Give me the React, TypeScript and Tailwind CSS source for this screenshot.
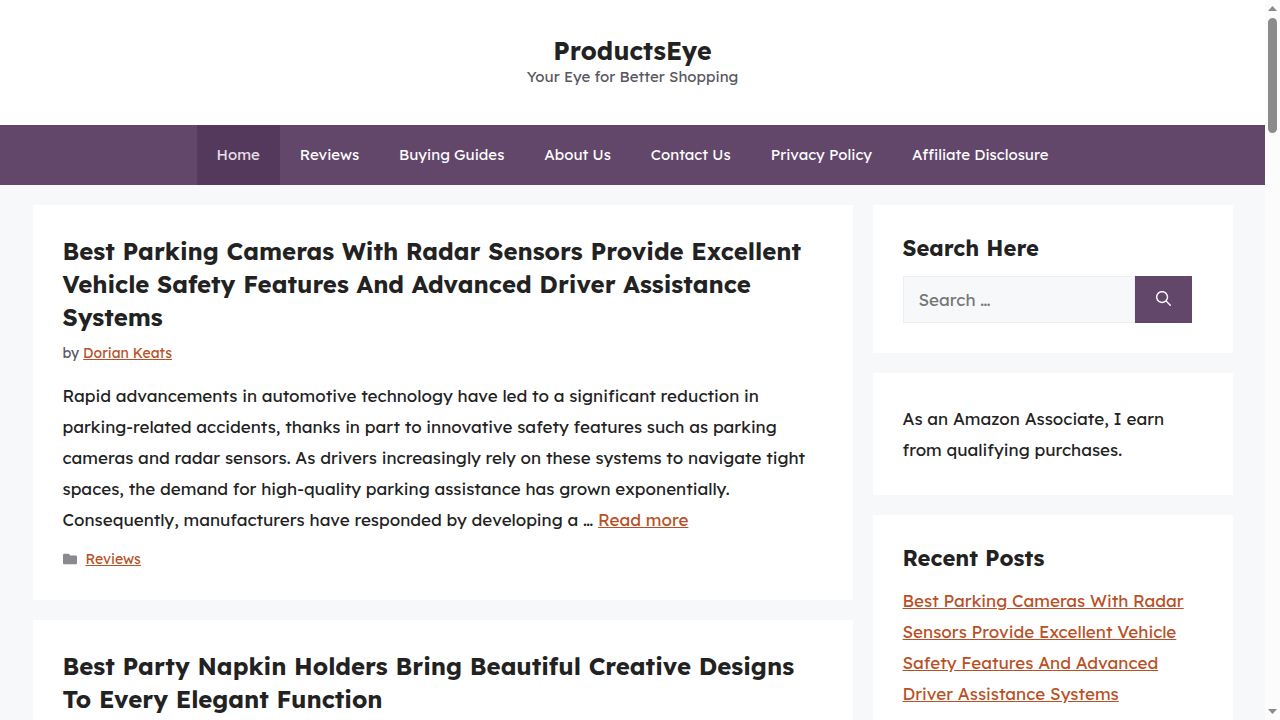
import { FaFolder } from 'react-icons/fa'

const navItems = [
  { label: 'Home', active: true },
  { label: 'Reviews' },
  { label: 'Buying Guides' },
  { label: 'About Us' },
  { label: 'Contact Us' },
  { label: 'Privacy Policy' },
  { label: 'Affiliate Disclosure' },
]

const linkClass = 'text-[#b95025] underline hover:text-[#222222]'

function SearchIcon() {
  return (
    <svg viewBox="0 0 512 512" className="size-[15px] fill-current" aria-hidden="true">
      <path
        fillRule="evenodd"
        clipRule="evenodd"
        d="M208 48c-88.366 0-160 71.634-160 160s71.634 160 160 160 160-71.634 160-160S296.366 48 208 48zM0 208C0 93.125 93.125 0 208 0s208 93.125 208 208c0 48.741-16.765 93.566-44.843 129.024l133.826 134.018c9.366 9.379 9.355 24.575-.025 33.941-9.379 9.366-24.575 9.355-33.941-.025L337.238 370.987C301.747 399.167 256.839 416 208 416 93.125 416 0 322.875 0 208z"
      />
    </svg>
  )
}

function Scrollbar() {
  return (
    <div className="flex w-[15px] shrink-0 flex-col items-center justify-between bg-[#fcfcfc] py-1.5" aria-hidden="true">
      <div className="flex flex-col items-center gap-[7px]">
        <svg viewBox="0 0 9 5" className="h-[5px] w-[9px] fill-[#8b8b8b]">
          <path d="M4.5 0L9 5H0z" />
        </svg>
        <div className="h-[115px] w-[9px] rounded-full bg-[#8b8b8b]" />
      </div>
      <svg viewBox="0 0 9 5" className="h-[5px] w-[9px] fill-[#8b8b8b]">
        <path d="M0 0h9L4.5 5z" />
      </svg>
    </div>
  )
}

function SiteHeader() {
  return (
    <header className="bg-white pt-[35px] pb-[38px] text-center">
      <p className="text-[25px] leading-[32px] font-bold">
        <a href="#">ProductsEye</a>
      </p>
      <p className="text-[15px] leading-[20px] text-[#575760]">Your Eye for Better Shopping</p>
    </header>
  )
}

function SiteNav() {
  return (
    <nav className="bg-[#63476b]">
      <ul className="flex justify-center">
        {navItems.map((item) => (
          <li key={item.label}>
            <a
              href="#"
              className={
                item.active
                  ? 'block bg-[#54395c] px-5 text-[15px] leading-[60px] text-[#e8e0ea]'
                  : 'block px-5 text-[15px] leading-[60px] text-white'
              }
            >
              {item.label}
            </a>
          </li>
        ))}
      </ul>
    </nav>
  )
}

function Posts() {
  return (
    <main className="flex min-w-0 flex-1 flex-col gap-5">
      <article className="bg-white p-[30px]">
        <h2 className="text-[24px] leading-[33px] font-bold">
          <a href="#">
            Best Parking Cameras With Radar Sensors Provide Excellent Vehicle Safety Features And Advanced Driver Assistance Systems
          </a>
        </h2>
        <p className="mt-2 text-[14px] leading-[22px] text-[#575760]">
          by <a href="#" className={linkClass}>Dorian Keats</a>
        </p>
        <p className="mt-4 text-[17px] leading-[31px]">
          Rapid advancements in automotive technology have led to a significant reduction in parking-related accidents, thanks in
          part to innovative safety features such as parking cameras and radar sensors. As drivers increasingly rely on these
          systems to navigate tight spaces, the demand for high-quality parking assistance has grown exponentially. Consequently,
          manufacturers have responded by developing a … <a href="#" className={linkClass}>Read more</a>
        </p>
        <footer className="mt-[13px] flex items-center gap-[9px] text-[14px] leading-[22px]">
          <FaFolder className="size-3.5 text-[#898990]" />
          <a href="#" className={linkClass}>Reviews</a>
        </footer>
      </article>

      <article className="bg-white p-[30px]">
        <h2 className="text-[24px] leading-[33px] font-bold">
          <a href="#">Best Party Napkin Holders Bring Beautiful Creative Designs To Every Elegant Function</a>
        </h2>
      </article>
    </main>
  )
}

function Sidebar() {
  return (
    <aside className="flex w-[360px] shrink-0 flex-col gap-5">
      <section className="bg-white p-[30px]">
        <h2 className="mb-[15px] text-[22px] leading-[26px] font-bold">Search Here</h2>
        <form role="search" className="flex h-[47px]" onSubmit={(e) => e.preventDefault()}>
          <input
            type="search"
            aria-label="Search for"
            placeholder="Search …"
            className="w-[232px] border border-[#eeeff0] bg-[#f7f8fa] px-[15px] text-[17px] placeholder:text-[#757575]"
          />
          <button type="submit" aria-label="Search" className="flex w-[57px] items-center justify-center bg-[#63476b] pb-0.5 text-white">
            <SearchIcon />
          </button>
        </form>
      </section>

      <section className="bg-white p-[30px]">
        <p className="text-[17px] leading-[31px]">As an Amazon Associate, I earn from qualifying purchases.</p>
      </section>

      <section className="bg-white p-[30px]">
        <h2 className="mb-3.5 text-[22px] leading-[26px] font-bold">Recent Posts</h2>
        <ul className="text-[17px] leading-[31px]">
          <li>
            <a href="#" className={linkClass}>
              Best Parking Cameras With Radar Sensors Provide Excellent Vehicle Safety Features And Advanced Driver Assistance Systems
            </a>
          </li>
        </ul>
      </section>
    </aside>
  )
}

export default function App() {
  return (
    <div className="flex h-screen overflow-hidden bg-[#f7f8fa] font-['Lexend','Inter',sans-serif] text-[#222222]">
      <div className="min-w-0 flex-1">
        <SiteHeader />
        <SiteNav />
        <div className="mx-auto flex max-w-[1200px] items-start gap-5 py-5">
          <Posts />
          <Sidebar />
        </div>
      </div>
      <Scrollbar />
    </div>
  )
}
